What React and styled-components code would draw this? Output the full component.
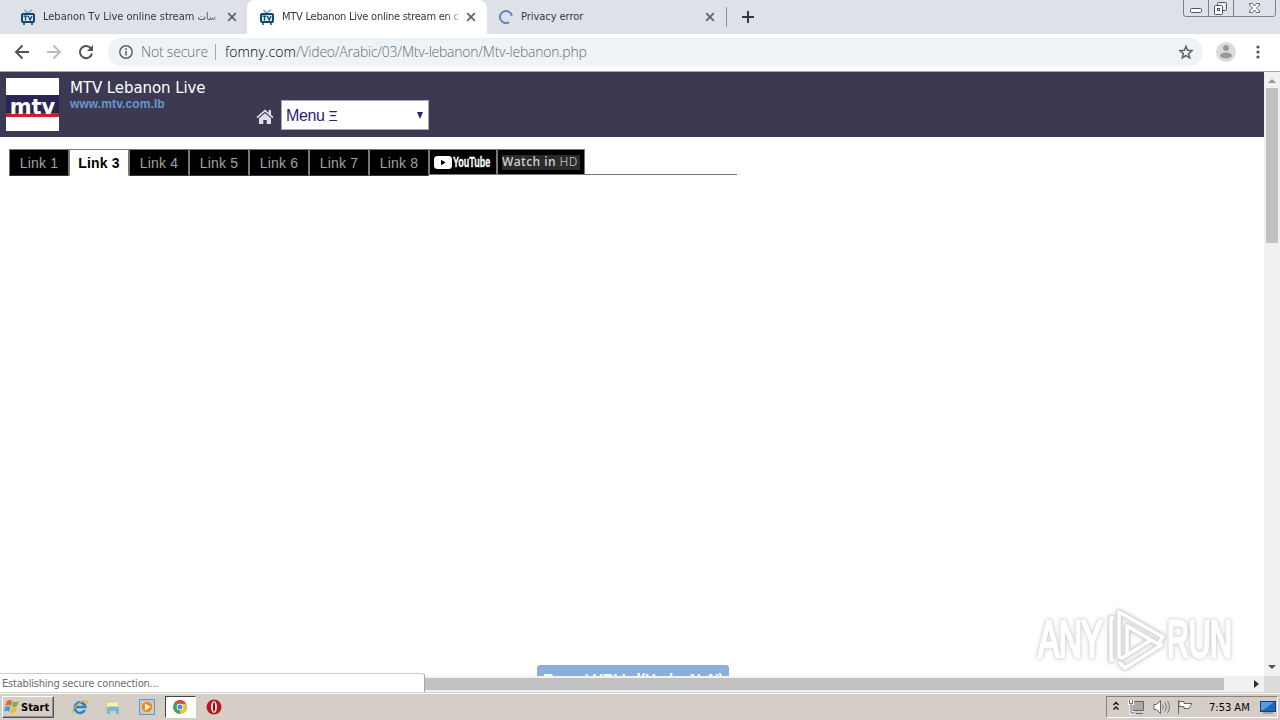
import React from "react";
import styled, { createGlobalStyle } from "styled-components";

const linkTabs = ["Link 1", "Link 3", "Link 4", "Link 5", "Link 6", "Link 7", "Link 8"];

function TvIcon() {
  return (
    <svg width="16" height="16" viewBox="0 0 16 16">
      <path d="M4.5 1l3 3.2L12 .8" fill="none" stroke="#4aa3cf" strokeWidth="1.2" />
      <rect x="1" y="4" width="14" height="10" rx="2" fill="#14466e" />
      <rect x="3" y="6" width="10" height="6" fill="#d5e9f3" />
      <path d="M3.5 7.2h4M5.5 7v4.5M8.3 7l1.8 4L12 7" fill="none" stroke="#14466e" strokeWidth="1.3" />
      <path d="M3 15h2M11 15h2" stroke="#14466e" strokeWidth="1.5" />
    </svg>
  );
}

function CloseIcon() {
  return (
    <svg width="10" height="10" viewBox="0 0 10 10">
      <path d="M1.2 1.2l7.6 7.6M8.8 1.2L1.2 8.8" stroke="#5f6368" strokeWidth="1.7" />
    </svg>
  );
}

function BrowserTabs() {
  return (
    <TabStrip>
      <BrowserTab $width={247} $pad={20}>
        <TvIcon />
        <TabTitle $left={7} $width={174} $spacing={-0.02} $fade>
          Lebanon Tv Live online stream <Arabic>سات</Arabic>
        </TabTitle>
        <TabClose $left={10}><CloseIcon /></TabClose>
      </BrowserTab>
      <BrowserTab $width={240} $pad={12} $active>
        <TvIcon />
        <TabTitle $left={7} $width={176} $spacing={-0.25} $fade>MTV Lebanon Live online stream en c</TabTitle>
        <TabClose $left={8}><CloseIcon /></TabClose>
      </BrowserTab>
      <BrowserTab $width={239} $pad={12}>
        <svg width="14" height="14" viewBox="0 0 14 14">
          <path d="M10 12.2A6 6 0 1 1 12.9 6" fill="none" stroke="#6488c2" strokeWidth="2" />
        </svg>
        <TabTitle $left={8} $width={176} $spacing={-0.05}>Privacy error</TabTitle>
        <TabClose $left={8}><CloseIcon /></TabClose>
      </BrowserTab>
      <NewTab>
        <svg width="12" height="12" viewBox="0 0 12 12">
          <path d="M6 0v12M0 6h12" stroke="#303846" strokeWidth="2" />
        </svg>
      </NewTab>
      <WindowButtons>
        <svg width="94" height="18" viewBox="0 0 94 18">
          <path d="M.5 0v14q0 2.5 2.5 2.5h87q2.5 0 2.5-2.5V0M25.5 0v16M50.5 0v16" fill="none" stroke="#7b8190" />
          <rect x="7.5" y="8.5" width="11" height="4" rx="1" fill="#fff" stroke="#50535f" />
          <rect x="34.5" y="2.5" width="9" height="8" rx="1" fill="#eee" stroke="#50535f" />
          <rect x="31.5" y="5.5" width="8" height="9" rx="1" fill="#fff" stroke="#50535f" />
          <rect x="34.5" y="8.5" width="2" height="2" fill="none" stroke="#50535f" />
          <path d="M66.5 3.5h3l2 2.5 2-2.5h3v1.5L73.5 8l3 3v1.5h-3l-2-2.5-2 2.5h-3V11l3-3-3-3z" fill="#fff" stroke="#50535f" strokeWidth=".9" />
        </svg>
      </WindowButtons>
    </TabStrip>
  );
}

function AddressBar() {
  return (
    <Toolbar>
      <NavIcons width="64" height="18" viewBox="0 0 64 18">
        <path d="M15 9H2M8.5 2.5L2 9l6.5 6.5" fill="none" stroke="#505357" strokeWidth="1.9" />
        <path d="M33 9h13M39.5 2.5L46 9l-6.5 6.5" fill="none" stroke="#babcbe" strokeWidth="1.9" />
      </NavIcons>
      <Reload width="16" height="16" viewBox="0 0 16 16">
        <path d="M13.2 4.8A6.1 6.1 0 1 0 14 9.5" fill="none" stroke="#505357" strokeWidth="2" />
        <path d="M15 1v6H9z" fill="#505357" />
      </Reload>
      <Omnibox>
        <svg width="14" height="14" viewBox="0 0 14 14">
          <circle cx="7" cy="7" r="6.2" fill="none" stroke="#5f6368" strokeWidth="1.5" />
          <path d="M7 6v4.5M7 3.3v1.6" stroke="#5f6368" strokeWidth="1.6" />
        </svg>
        <Security>Not secure</Security>
        <Divider />
        <Host>fomny.com</Host>
        <Path>/Video/Arabic/03/Mtv-lebanon/Mtv-lebanon.php</Path>
        <Star width="16" height="16" viewBox="0 0 16 16">
          <path d="M8 2.3l1.6 4 4.4.4-3.3 2.9 1 4.2L8 11.5l-3.7 2.3 1-4.2L2 6.7l4.4-.4z" fill="none" stroke="#5f6368" strokeWidth="1.5" />
        </Star>
      </Omnibox>
      <Avatar width="20" height="20" viewBox="0 0 20 20">
        <circle cx="10" cy="10" r="10" fill="#dadada" />
        <circle cx="10" cy="6" r="3" fill="#999" />
        <ellipse cx="10" cy="13.5" rx="6" ry="3" fill="#999" />
      </Avatar>
      <svg width="4" height="14" viewBox="0 0 4 14" fill="#505357">
        <circle cx="2" cy="2" r="1.6" />
        <circle cx="2" cy="7" r="1.6" />
        <circle cx="2" cy="12" r="1.6" />
      </svg>
    </Toolbar>
  );
}

function SiteHeader() {
  return (
    <Header>
      <Logo><LogoBand>mtv</LogoBand></Logo>
      <SiteInfo>
        <SiteName>MTV Lebanon Live</SiteName>
        <SiteUrl>www.mtv.com.lb</SiteUrl>
      </SiteInfo>
      <HomeIcon width="18" height="15" viewBox="0 0 18 15">
        <path d="M9 .5L.5 8l1 1.2L9 2.8l7.5 6.4 1-1.2L15 5.7V1h-2.3v2.7z" fill="#dfdfe8" />
        <path d="M3 9.2l6-5 6 5V15h-4.3v-4H7.3v4H3z" fill="#dfdfe8" />
      </HomeIcon>
      <MenuSelect>
        <span>Menu <MenuBars>Ξ</MenuBars></span>
        <svg width="6" height="7" viewBox="0 0 6 7"><path d="M0 0h6L3 7z" fill="#2b2372" /></svg>
      </MenuSelect>
    </Header>
  );
}

function LinkBar() {
  return (
    <Links>
      {linkTabs.map((label) => (
        <LinkTab key={label} $active={label === "Link 3"}>{label}</LinkTab>
      ))}
      <YoutubeTab>
        <svg width="18" height="13" viewBox="0 0 18 13">
          <rect width="18" height="13" rx="3.5" fill="#fff" />
          <path d="M7 3.7v5.6l4.6-2.8z" fill="#000" />
        </svg>
        <YoutubeName>YouTube</YoutubeName>
      </YoutubeTab>
      <HdTab><HdLabel>Watch in <span>HD</span></HdLabel></HdTab>
      <LinkLine />
    </Links>
  );
}

function AnyRun() {
  return (
    <Watermark>
      <WatermarkText $width={69} $scale={0.63}><span>ANY</span></WatermarkText>
      <svg width="60" height="64" viewBox="0 0 60 64">
        <g fill="none" stroke="#dadada" strokeWidth="5" strokeLinejoin="round">
          <path d="M12 49V4l44 25-5 7-31-18v29l-5 3z" />
          <path d="M20 47l24-15" />
          <path d="M7 10H4v42h3M12 54l6 6 38-24" />
        </g>
        <g fill="none" stroke="#fff" strokeWidth="3.4" strokeLinejoin="round">
          <path d="M12 49V4l44 25-5 7-31-18v29l-5 3z" />
          <path d="M20 47l24-15" />
          <path d="M7 10H4v42h3M12 54l6 6 38-24" />
        </g>
      </svg>
      <WatermarkText $width={65} $scale={0.6}><span>RUN</span></WatermarkText>
    </Watermark>
  );
}

function Taskbar() {
  return (
    <Bar>
      <StartButton>
        <svg width="16" height="16" viewBox="0 0 16 16">
          <path d="M3 2q3-2 5 0L7 7Q4 5 1 7z" fill="#e46532" />
          <path d="M9 2.5q3 1.5 6-.5l-2 5q-2 2-5 .5z" fill="#75b43e" />
          <path d="M1 8q3-1.5 5.5 0L5 13q-2-2-5-.5z" fill="#499bd8" />
          <path d="M7.5 8.5q3 1.5 5.5-.5l-1.5 5q-3 2-5.5.5z" fill="#f4b929" />
        </svg>
        <StartLabel>Start</StartLabel>
      </StartButton>
      <Launcher $left={10}>
        <svg width="16" height="16" viewBox="0 0 16 16">
          <path d="M12.8 11A5.3 5.3 0 1 1 13.3 8H4" fill="none" stroke="#2387d3" strokeWidth="2.6" />
          <path d="M1 14C-1 10 10 0 15 2q1 1-1 3" fill="none" stroke="#e6b343" strokeWidth="1.3" />
        </svg>
      </Launcher>
      <Launcher>
        <svg width="16" height="16" viewBox="0 0 16 16">
          <path d="M1 2h5l1 2h7v9H1z" fill="#e9c869" />
          <path d="M2 3.5h11v5H2z" fill="#fff0ab" />
          <path d="M2 15V9.5q0-2 2-2h8q2 0 2 2V15h-3v-3H5v3z" fill="#76b9dc" />
        </svg>
      </Launcher>
      <Launcher>
        <svg width="16" height="16" viewBox="0 0 16 16">
          <rect x=".5" y=".5" width="15" height="15" fill="#a9ceec" stroke="#639acb" />
          <circle cx="8" cy="8" r="5.8" fill="#f18a19" stroke="#fbd18b" />
          <path d="M6 4.5v7L11.5 8z" fill="#fff" />
        </svg>
      </Launcher>
      <Launcher $active>
        <svg width="14" height="14" viewBox="0 0 14 14">
          <circle cx="7" cy="7" r="7" fill="#48a35a" />
          <path d="M7 7l3-3.5h3A7 7 0 0 1 7 14z" fill="#f2c33b" />
          <path d="M1 3.5A7 7 0 0 1 13 3.5H7z" fill="#dc4b3e" />
          <circle cx="7" cy="7" r="3.3" fill="#fff" />
          <circle cx="7" cy="7" r="2.5" fill="#4888e5" />
        </svg>
      </Launcher>
      <Launcher>
        <svg width="16" height="16" viewBox="0 0 16 16">
          <circle cx="8" cy="8" r="7.5" fill="#b91620" />
          <ellipse cx="8" cy="8" rx="3" ry="6" fill="#f8e8e8" />
          <ellipse cx="8" cy="8" rx="1.1" ry="4.8" fill="#861017" />
        </svg>
      </Launcher>
      <Tray>
        <svg width="76" height="18" viewBox="0 0 76 18" fill="none">
          <path d="M1.5 7L4 4.5 6.500 7M1.500 11.500L4 9l2.500 2.500" stroke="#111" strokeWidth="1.400" />
          <path d="M20.5 3.5h11v9h-11zM24 15.5h7" fill="#aaa" stroke="#666" />
          <path d="M17.5 2v3.5h3V2M19 6v9h4" stroke="#fff" strokeWidth="3" />
          <path d="M17.5 2v3.5h3V2M19 6v9h4" stroke="#666" />
          <path d="M42 6.5h2.500l4-4v13l-4-4H42z" fill="#fff" stroke="#666" />
          <path d="M50.5 6.5q1.5 2.5 0 5M53 4.5q3 4.5 0 9M55.5 3q4 6 0 12" stroke="#777" />
          <path d="M66.5 16V2M67 3.5h5v2h8l-3 5h-5v-2h-5z" fill="#fff" stroke="#666" />
        </svg>
        <Clock>7:53 AM</Clock>
        <svg width="16" height="13" viewBox="0 0 16 13">
          <rect x=".5" y=".5" width="15" height="10" fill="#1c66bd" stroke="#193e76" />
          <path d="M1 1h13L3 9H1z" fill="#5c9be0" />
          <path d="M3 12h10" stroke="#777" />
        </svg>
      </Tray>
    </Bar>
  );
}

export default function App() {
  return (
    <Screen>
      <GlobalStyle />
      <BrowserTabs />
      <AddressBar />
      <Viewport>
        <Page>
          <SiteHeader />
          <LinkBar />
          <ReportButton>Report URL&apos;s |(Under NaN)</ReportButton>
        </Page>
        <VerticalScroll>
          <ScrollArrow $up />
          <ScrollThumb />
          <ScrollArrow />
        </VerticalScroll>
      </Viewport>
      <BottomEdge>
        <HorizontalTrack />
        <ScrollRight />
        <Corner />
      </BottomEdge>
      <Status>Establishing secure connection...</Status>
      <AnyRun />
      <Taskbar />
    </Screen>
  );
}

const GlobalStyle = createGlobalStyle`
  * {
    box-sizing: border-box;
  }

  body {
    margin: 0;
    overflow: hidden;
  }

  svg {
    display: block;
    flex-shrink: 0;
  }
`;

const Screen = styled.div`
  position: relative;
  display: flex;
  flex-direction: column;
  width: 1280px;
  height: 720px;
  overflow: hidden;
  background: #fff;
  font-family: "DejaVu Sans Condensed", "DejaVu Sans", sans-serif;
  font-size: 11px;
  white-space: nowrap;
`;

const TabStrip = styled.div`
  display: flex;
  height: 34px;
  background: #dee1e8;
`;

const BrowserTab = styled.div`
  display: flex;
  align-items: center;
  width: ${({ $width }) => $width}px;
  height: 34px;
  padding-left: ${({ $pad }) => $pad}px;
  border-radius: 8px 8px 0 0;
  background: ${({ $active }) => ($active ? "#fff" : "transparent")};
`;

const TabTitle = styled.div`
  width: ${({ $width }) => $width}px;
  margin-left: ${({ $left }) => $left}px;
  color: #35373c;
  font-size: 11px;
  letter-spacing: ${({ $spacing }) => $spacing || 0}px;
  line-height: 16px;
  mask-image: ${({ $fade }) => ($fade ? "linear-gradient(to right, #000 93%, transparent 105%)" : "none")};
`;

const Arabic = styled.span`
  font-size: 10px;
`;

const TabClose = styled.div`
  margin-left: ${({ $left }) => $left}px;
`;

const NewTab = styled.div`
  display: flex;
  align-items: center;
  align-self: center;
  height: 20px;
  padding-left: 15px;
  border-left: 1px solid #8b9099;
`;

const WindowButtons = styled.div`
  margin: 0 3px 0 auto;
`;

const Toolbar = styled.div`
  display: flex;
  align-items: center;
  height: 38px;
  padding: 0 20px 2px 14px;
  border-bottom: 1px solid #a8a9ad;
`;

const NavIcons = styled.svg`
  width: 64px;
`;

const Reload = styled.svg`
  margin-right: 14px;
`;

const Omnibox = styled.div`
  display: flex;
  align-items: center;
  width: 1096px;
  height: 28px;
  padding: 0 10px 0 11px;
  border-radius: 14px;
  background: #f0f3f6;
  color: #666c72;
  font-family: "Open Sans", "Noto Sans", sans-serif;
  font-size: 14px;
  font-weight: 300;
`;

const Security = styled.span`
  width: 75px;
  margin-left: 8px;
  letter-spacing: -0.2px;
`;

const Divider = styled.div`
  width: 1px;
  height: 16px;
  margin: 0 9px 0 -1px;
  background: #a5a8ac;
`;

const Host = styled.span`
  width: 71px;
  color: #000;
  letter-spacing: 0.1px;
`;

const Path = styled.span`
  letter-spacing: -0.24px;
`;

const Star = styled.svg`
  margin: 0 -1px 0 auto;
`;

const Avatar = styled.svg`
  margin: 0 20px 0 13px;
`;

const Viewport = styled.div`
  display: flex;
  height: 604px;
`;

const Page = styled.main`
  display: flex;
  flex-direction: column;
  width: 1264px;
  height: 604px;
  overflow: hidden;
`;

const Header = styled.header`
  display: flex;
  height: 65px;
  padding: 6px;
  background: #3c3a52;
`;

const Logo = styled.div`
  width: 53px;
  height: 53px;
  padding-top: 17px;
  background: #fff;
`;

const LogoBand = styled.div`
  width: 53px;
  height: 22px;
  border-bottom: 4px solid #c7222d;
  background: #292656;
  color: #fff;
  font-family: "DejaVu Sans", sans-serif;
  font-size: 21px;
  font-weight: 700;
  line-height: 25px;
  text-align: center;
`;

const SiteInfo = styled.div`
  width: 193px;
  padding: 1px 0 0 11px;
  font-family: "DejaVu Sans", sans-serif;
`;

const SiteName = styled.div`
  color: #fff;
  font-size: 15px;
  letter-spacing: -0.08px;
  line-height: 19px;
`;

const SiteUrl = styled.div`
  color: #6597ce;
  font-family: "Liberation Sans", sans-serif;
  font-size: 12px;
  font-weight: 700;
  letter-spacing: 0.1px;
  line-height: 12px;
`;

const HomeIcon = styled.svg`
  margin: 31px 0 0 4px;
`;

const MenuSelect = styled.div`
  display: flex;
  align-items: center;
  justify-content: space-between;
  width: 148px;
  height: 30px;
  margin: 22px 0 0 7px;
  padding: 1px 5px 0 4px;
  border: 1px solid #aaa8b3;
  background: #fff;
  color: #2b2372;
  font-family: "Liberation Sans", sans-serif;
  font-size: 16px;
  letter-spacing: -0.4px;
`;

const MenuBars = styled.span`
  font-size: 14px;
`;

const Links = styled.nav`
  display: flex;
  width: 728px;
  height: 27px;
  margin: 12px 0 0 9px;
`;

const LinkTab = styled.div`
  width: 60px;
  height: 27px;
  border: 1px solid #777;
  border-bottom-color: ${({ $active }) => ($active ? "#fff" : "#333")};
  background: ${({ $active }) => ($active ? "#fff" : "#000")};
  color: ${({ $active }) => ($active ? "#000" : "#a2a2a2")};
  font-family: "Liberation Sans", sans-serif;
  font-size: 14px;
  font-weight: ${({ $active }) => ($active ? 700 : 400)};
  letter-spacing: 0.2px;
  line-height: 26px;
  text-align: center;
`;

const YoutubeTab = styled.div`
  display: flex;
  align-items: center;
  width: 68px;
  height: 26px;
  padding-left: 4px;
  border: 1px solid #777;
  background: #000;
`;

const YoutubeName = styled.span`
  width: 37px;
  margin-left: 1px;
  color: #fff;
  font-family: "Liberation Sans", sans-serif;
  font-size: 15px;
  font-weight: 700;
  -webkit-text-stroke: 0.3px #fff;
  transform: translateY(-1px) scaleX(0.6);
  transform-origin: left;
`;

const HdTab = styled.div`
  display: flex;
  align-items: center;
  justify-content: center;
  width: 88px;
  height: 26px;
  border: 1px solid #777;
  background: #000;
`;

const HdLabel = styled.div`
  width: 78px;
  height: 15px;
  background: #2b2b2b;
  color: #ccc;
  font-family: "Open Sans", sans-serif;
  font-size: 12px;
  font-weight: 600;
  letter-spacing: 0.4px;
  line-height: 14px;

  span {
    color: #aaa;
    font-weight: 400;
  }
`;

const LinkLine = styled.div`
  flex: 1;
  height: 26px;
  border-bottom: 1px solid #777;
`;

const ReportButton = styled.div`
  width: 192px;
  height: 36px;
  margin: 489px 0 0 537px;
  flex-shrink: 0;
  border-radius: 3px;
  background: #8aafd9;
  color: #fff;
  font-family: "Liberation Sans", sans-serif;
  font-size: 15px;
  font-weight: 700;
  letter-spacing: -0.45px;
  line-height: 28px;
  text-align: center;
`;

const VerticalScroll = styled.div`
  display: flex;
  flex-direction: column;
  align-items: center;
  width: 16px;
  height: 604px;
  padding: 7px 0 7px;
  background: #f1f1f1;
`;

const ScrollArrow = styled.div`
  width: 0;
  height: 0;
  margin-top: ${({ $up }) => ($up ? 0 : "auto")};
  border-left: 4px solid transparent;
  border-right: 4px solid transparent;
  border-bottom: ${({ $up }) => ($up ? "4px solid #999" : "none")};
  border-top: ${({ $up }) => ($up ? "none" : "4px solid #505050")};
`;

const ScrollThumb = styled.div`
  width: 12px;
  height: 155px;
  margin-top: 5px;
  background: #c1c1c1;
`;

const BottomEdge = styled.div`
  display: flex;
  align-items: center;
  height: 16px;
  background: #f1f1f1;
`;

const HorizontalTrack = styled.div`
  width: 1224px;
  height: 12px;
  background: #c1c1c1;
`;

const ScrollRight = styled.div`
  margin: 0 5px 0 30px;
  border-top: 4px solid transparent;
  border-bottom: 4px solid transparent;
  border-left: 5px solid #303030;
`;

const Corner = styled.div`
  flex: 1;
  height: 16px;
  background: #dcdcdc;
`;

const Status = styled.div`
  position: absolute;
  left: 0;
  top: 673px;
  width: 425px;
  height: 19px;
  padding-left: 2px;
  border-top: 1px solid #ccc;
  border-right: 1px solid #aaa;
  border-radius: 0 3px 0 0;
  background: #fff;
  color: #6b6d70;
  letter-spacing: -0.2px;
  line-height: 20px;
`;

const Watermark = styled.div`
  position: absolute;
  left: 1038px;
  top: 608px;
  display: flex;
  align-items: center;
  width: 196px;
  height: 64px;
  filter: drop-shadow(0 0 1px #ccc) drop-shadow(0 0 2px #ddd);
`;

const WatermarkText = styled.div`
  width: ${({ $width }) => $width}px;
  color: #fff;
  font-family: "Liberation Sans", sans-serif;
  font-size: 51px;
  -webkit-text-stroke: 3px #fff;
  letter-spacing: -1px;
  line-height: 68px;

  span {
    display: block;
    width: 0;
    transform: scaleX(${({ $scale }) => $scale});
    transform-origin: left;
  }
`;

const Bar = styled.footer`
  display: flex;
  align-items: center;
  height: 28px;
  padding: 1px 2px 0;
  border-top: 1px solid #d5d2cc;
  background: #d5cec6;
  box-shadow: inset 0 1px #fff;
`;

const StartButton = styled.div`
  display: flex;
  align-items: center;
  width: 52px;
  height: 22px;
  padding-left: 1px;
  border: 1px solid;
  border-color: #fff #555 #555 #fff;
  box-shadow: inset -1px -1px #969088;
  color: #000;
`;

const StartLabel = styled.span`
  margin-left: 1px;
  font-size: 11px;
  font-weight: 700;
`;

const Launcher = styled.div`
  display: flex;
  align-items: center;
  justify-content: center;
  width: 31px;
  height: 22px;
  margin-left: ${({ $left }) => $left || 2.5}px;
  border: 1px solid;
  border-color: ${({ $active }) => ($active ? "#444 #fff #fff #444" : "transparent")};
  background: ${({ $active }) => ($active ? "#fff" : "transparent")};
`;

const Tray = styled.div`
  display: flex;
  align-items: center;
  width: 172px;
  height: 22px;
  margin-left: auto;
  padding-left: 5px;
  border: 1px solid;
  border-color: #88827a #fff #fff #88827a;

  svg {
    overflow: visible;
  }
`;

const Clock = styled.span`
  width: 51px;
  margin-left: 21px;
  color: #000;
`;
